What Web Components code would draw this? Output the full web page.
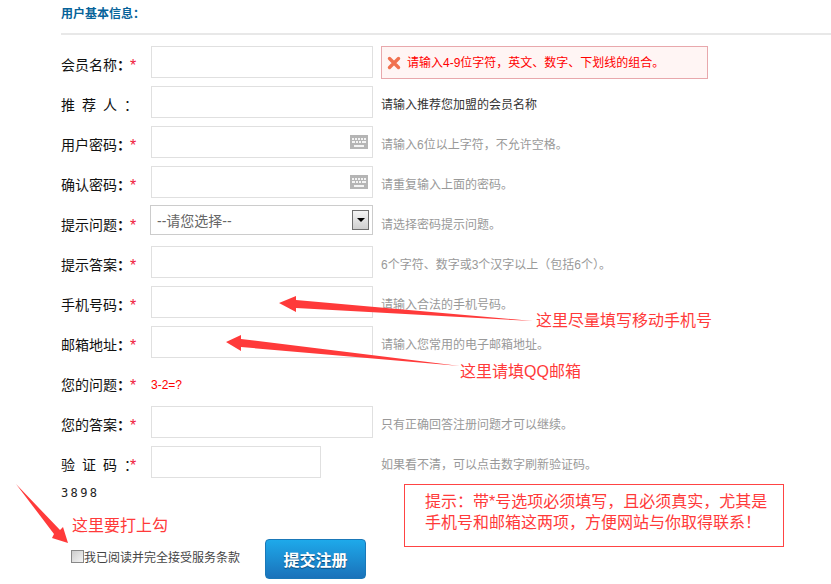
<!DOCTYPE html>
<html lang="zh">
<head>
<meta charset="utf-8">
<title>用户基本信息</title>
<style>
  html, body { margin: 0; background: #fff; }
  body { font-family: "Liberation Sans", "Noto Sans CJK SC", sans-serif; overflow: hidden; }
</style>
</head>
<body>

<reg-page>
  <section-title>用户基本信息：</section-title>

  <form-row label="会员名称" required>
    <text-box></text-box>
    <error-tip slot="hint">请输入4-9位字符，英文、数字、下划线的组合。</error-tip>
  </form-row>
  <form-row label="推荐人" spaced>
    <text-box></text-box>
    <span slot="hint" style="color:#333">请输入推荐您加盟的会员名称</span>
  </form-row>
  <form-row label="用户密码" required>
    <text-box keyboard></text-box>
    <span slot="hint">请输入6位以上字符，不允许空格。</span>
  </form-row>
  <form-row label="确认密码" required>
    <text-box keyboard></text-box>
    <span slot="hint">请重复输入上面的密码。</span>
  </form-row>
  <form-row label="提示问题" required>
    <select-box>--请您选择--</select-box>
    <span slot="hint">请选择密码提示问题。</span>
  </form-row>
  <form-row label="提示答案" required>
    <text-box></text-box>
    <span slot="hint">6个字符、数字或3个汉字以上（包括6个）。</span>
  </form-row>
  <form-row label="手机号码" required>
    <text-box></text-box>
    <span slot="hint">请输入合法的手机号码。</span>
  </form-row>
  <form-row label="邮箱地址" required>
    <text-box></text-box>
    <span slot="hint">请输入您常用的电子邮箱地址。</span>
  </form-row>
  <form-row label="您的问题" required>
    <span style="color:#f00;font-size:12px;line-height:38px;display:block">3-2=?</span>
  </form-row>
  <form-row label="您的答案" required>
    <text-box></text-box>
    <span slot="hint">只有正确回答注册问题才可以继续。</span>
  </form-row>
  <form-row label="验证码" required spaced>
    <text-box short></text-box>
    <span slot="hint">如果看不清，可以点击数字刷新验证码。</span>
  </form-row>

  <captcha-code>3898</captcha-code>

  <agree-bar>我已阅读并完全接受服务条款</agree-bar>

  <note-mark style="left:536px;top:311px">这里尽量填写移动手机号</note-mark>
  <note-mark style="left:460px;top:362px">这里请填QQ邮箱</note-mark>
  <note-mark style="left:72px;top:516px">这里要打上勾</note-mark>
  <note-box>提示：带*号选项必须填写，且必须真实，尤其是<br>手机号和邮箱这两项，方便网站与你取得联系！</note-box>
  <arrow-layer></arrow-layer>
</reg-page>

<script>
// small helper so each element just declares its css + markup
function define(name, html, setup) {
  customElements.define(name, class extends HTMLElement {
    connectedCallback() {
      if (this.shadowRoot) return;
      this.attachShadow({ mode: 'open' });
      this.shadowRoot.innerHTML = typeof html === 'function' ? html(this) : html;
      if (setup) setup(this);
    }
  });
}

define('reg-page', `
  <style>
    :host {
      display: block;
      position: relative;
      width: 831px;
      height: 584px;
      overflow: hidden;
      padding-left: 61px;
      box-sizing: border-box;
      font-family: "Liberation Sans", "Noto Sans CJK SC", sans-serif;
    }
  </style>
  <slot></slot>
`);

define('section-title', `
  <style>
    :host {
      display: block;
      height: 33px;
      margin-bottom: 11px;
      border-bottom: 2px solid #e8e8e8;
      font-size: 12px;
      font-weight: bold;
      line-height: 29px;
      color: #06639a;
    }
  </style>
  <slot></slot>
`);

define('form-row', (el) => `
  <style>
    :host { display: flex; height: 40px; align-items: flex-start; }
    .label {
      width: 69px;
      font-size: 14px;
      line-height: 38px;
      color: #111;
      white-space: nowrap;
    }
    .spaced { letter-spacing: 7px; }
    .spaced b { letter-spacing: 0; font-weight: normal; }
    .star {
      width: 21px;
      font-size: 16px;
      line-height: 40px;
      color: #f0203a;
    }
    .field { width: 230px; flex: none; }
    .hint { font-size: 12px; line-height: 38px; color: #999; white-space: nowrap; }
  </style>
  <div class="label${el.hasAttribute('spaced') ? ' spaced' : ''}">${el.getAttribute('label')}<b>：</b></div>
  <div class="star">${el.hasAttribute('required') ? '*' : ''}</div>
  <div class="field"><slot></slot></div>
  <div class="hint"><slot name="hint"></slot></div>
`);

define('text-box', (el) => `
  <style>
    :host { display: block; position: relative; width: ${el.hasAttribute('short') ? 170 : 222}px; height: 32px; }
    input {
      display: block;
      width: 100%;
      height: 100%;
      box-sizing: border-box;
      border: 1px solid #e0e0e0;
      background: #fff;
      outline: none;
      padding: 0 6px;
    }
    svg { position: absolute; right: 5px; top: 9px; }
  </style>
  <input type="text">
  ${el.hasAttribute('keyboard') ? `
  <svg width="18" height="14" viewBox="0 0 18 14">
    <rect width="18" height="14" fill="#b5b5b5"/>
    <path d="M2 3h2v2H2zM5 3h2v2H5zM8 3h2v2H8zM11 3h2v2h-2zM14 3h2v2h-2zM2 6h3v2H2zM6 6h2v2H6zM9 6h2v2H9zM12 6h4v2h-4zM4 10h10v2H4z" fill="#f4f4f4"/>
  </svg>` : ''}
`);

define('select-box', `
  <style>
    :host {
      display: flex;
      align-items: center;
      justify-content: space-between;
      box-sizing: border-box;
      width: 223px;
      height: 30px;
      margin: -1px 0 0 -1px;
      padding: 0 3px 0 6px;
      border: 1px solid #ccc;
      background: #fff;
      font-size: 14px;
      color: #666;
    }
    .btn {
      display: flex;
      align-items: center;
      justify-content: center;
      box-sizing: border-box;
      width: 17px;
      height: 20px;
      border: 1px solid #6e6e6e;
      background: linear-gradient(#f4f4f4, #cfcfcf);
    }
    .btn i {
      border: 4px solid transparent;
      border-top: 4px solid #000;
      border-bottom: 0;
      display: block;
    }
  </style>
  <span><slot></slot></span>
  <div class="btn"><i></i></div>
`);

define('error-tip', `
  <style>
    :host {
      display: flex;
      align-items: center;
      gap: 6px;
      box-sizing: border-box;
      width: 327px;
      height: 33px;
      padding-left: 5px;
      border: 1px solid #e8a8ac;
      background: #fff5f4;
      color: #f00;
      font-size: 12px;
    }
  </style>
  <svg width="14" height="14" viewBox="0 0 14 14">
    <path d="M2.5 2.5 L11.5 11.5 M11.5 2.5 L2.5 11.5" stroke="#f0714f" stroke-width="3.4" stroke-linecap="round"/>
  </svg>
  <span><slot></slot></span>
`);

define('captcha-code', `
  <style>
    :host {
      display: block;
      margin-top: -1px;
      font-family: "DejaVu Sans Mono", monospace;
      font-size: 12px;
      letter-spacing: 2.4px;
      line-height: 16px;
      color: #222;
    }
  </style>
  <slot></slot>
`);

define('agree-bar', `
  <style>
    :host {
      display: flex;
      align-items: flex-start;
      margin-top: 38px;
      margin-left: 10px;
      font-size: 12px;
      color: #444;
    }
    .box {
      width: 13px;
      height: 13px;
      box-sizing: border-box;
      margin-top: 11px;
      border: 1px solid #888;
      background: linear-gradient(135deg, #ccc, #f4f4f4);
    }
    .text { margin-top: 11px; line-height: 17px; width: 181px; }
    button {
      width: 101px;
      height: 40px;
      padding: 0;
      border: 1px solid #1a78b8;
      border-radius: 4px;
      background: linear-gradient(#1ea9ea, #1a72ba);
      color: #fff;
      font-family: inherit;
      font-size: 16px;
      font-weight: bold;
      text-shadow: 0 1px 1px #0d4a7a;
    }
  </style>
  <div class="box"></div>
  <div class="text"><slot></slot></div>
  <button type="button">提交注册</button>
`);

// the red handwritten notes sit on top of the form
define('note-mark', `
  <style>
    :host {
      position: absolute;
      font-size: 16px;
      line-height: 20px;
      color: #ff3a3a;
      white-space: nowrap;
    }
  </style>
  <slot></slot>
`);

define('note-box', `
  <style>
    :host {
      position: absolute;
      left: 404px;
      top: 484px;
      width: 380px;
      height: 63px;
      box-sizing: border-box;
      padding: 6px 0 0 20px;
      border: 1px solid #f44;
      font-size: 16px;
      line-height: 21px;
      color: #ff3a3a;
      white-space: nowrap;
    }
  </style>
  <slot></slot>
`);

define('arrow-layer', `
  <style>
    :host { position: absolute; inset: 0; pointer-events: none; }
    svg { display: block; }
  </style>
  <svg width="831" height="584" viewBox="0 0 831 584">
    <g fill="#ff3a3a">
      <path d="M279 303 L296 296 L296 300 L533 321 L296 308 L296 312 Z"/>
      <path d="M226 342 L241 335 L241 339 L460 366 L241 347 L241 351 Z"/>
      <path d="M68 543 L52 538 L54 534 L16 484 L60 530 L63 527 Z"/>
    </g>
  </svg>
`);
</script>
</body>
</html>
